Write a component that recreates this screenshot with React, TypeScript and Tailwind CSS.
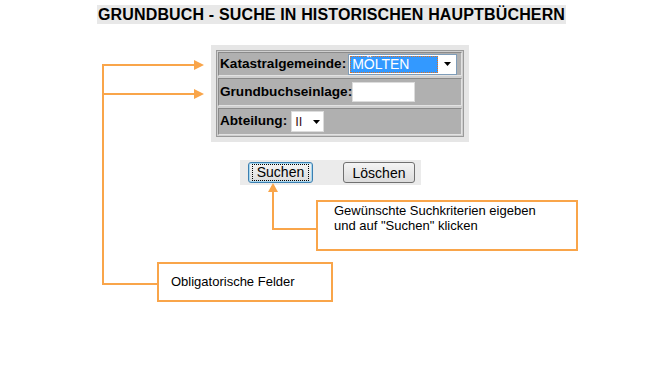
const orange = "border-[#f9a54a]";

const Arrow = ({ dir }: { dir: "right" | "up" }) =>
  dir === "right" ? (
    <svg width="10" height="10" viewBox="0 0 10 10" className="block">
      <polygon points="0,0 10,5 0,10" fill="#f9a54a" />
    </svg>
  ) : (
    <svg width="10" height="9" viewBox="0 0 10 9" className="block">
      <polygon points="5,0 10,9 0,9" fill="#f9a54a" />
    </svg>
  );

const Row = ({ h, children }: { h: string; children: React.ReactNode }) => (
  <div className={`flex items-center ${h} bg-[#b0b0b0] border-t border-l border-t-[#8a8a8a] border-l-[#8a8a8a] border-b border-r border-b-[#e2e2e2] border-r-[#e2e2e2] pl-[1px]`}>
    {children}
  </div>
);

export default function App() {
  return (
    <div
      className="relative w-[667px] h-[371px] bg-white overflow-hidden text-black"
      style={{ fontFamily: '"Liberation Sans", Arial, sans-serif' }}
    >
      {/* title */}
      <div className="flex pt-[5px] pl-[97px]">
        <h1 className="bg-[#e8e8e8] px-[1px] text-[16px] leading-[19px] font-bold tracking-[0.15px]">
          GRUNDBUCH - SUCHE IN HISTORISCHEN HAUPTBÜCHERN
        </h1>
      </div>

      {/* search form */}
      <div className="ml-[211px] mt-[21px] w-[258px] bg-[#e6e6e6] p-[5px]">
        <div className="flex flex-col gap-[2px] border border-[#9a9a9a] bg-[#cfcfcf] p-[1px] text-[13.6px] font-bold">
          <Row h="h-[24px]">
            <span>Katastralgemeinde:</span>
            <div className="ml-[2px] flex items-center h-[21px] w-[109px] bg-white border border-[#7f9db9] pl-[1px]">
              <span className="flex-1 h-[17px] bg-[#3399ff] text-white font-normal text-[14px] leading-[15px] px-[1px] border border-dotted border-[#e07020]">
                MÖLTEN
              </span>
              <span className="w-[18px] flex justify-center">
                <svg width="7" height="4" viewBox="0 0 7 4">
                  <polygon points="0,0 7,0 3.5,4" fill="#000" />
                </svg>
              </span>
            </div>
          </Row>
          <Row h="h-[28px]">
            <span>Grundbuchseinlage:</span>
            <div className="h-[20px] w-[63px] bg-white border border-[#dcdcdc]" />
          </Row>
          <Row h="h-[27px]">
            <span>Abteilung:</span>
            <div className="ml-[4px] flex items-center h-[21px] w-[33px] bg-white border border-[#dcdcdc] pl-[3px]">
              <span className="flex-1 font-normal text-[#401010] text-[13px]">II</span>
              <span className="w-[14px] flex justify-center">
                <svg width="7" height="4" viewBox="0 0 7 4">
                  <polygon points="0,0 7,0 3.5,4" fill="#000" />
                </svg>
              </span>
            </div>
          </Row>
        </div>
      </div>

      {/* buttons */}
      <div className="ml-[240px] mt-[18px] w-[181px] h-[25px] bg-[#ebebeb] flex items-center gap-[30px] pl-[8px] text-[14px]">
        <button className="h-[21px] w-[65px] rounded-[3px] border border-[#3c7fb1] bg-gradient-to-b from-[#f4f4f4] to-[#dcdcdc] shadow-[inset_0_0_0_1px_#a8d8f0] flex items-center justify-center">
          <span className="border border-dotted border-black px-[4px] leading-[15px]">Suchen</span>
        </button>
        <button className="h-[21px] w-[72px] rounded-[3px] border border-[#707070] bg-gradient-to-b from-[#f4f4f4] to-[#dcdcdc]">
          Löschen
        </button>
      </div>

      {/* annotations */}
      <div className="absolute left-[102px] top-[64px] w-[2px] h-[221px] bg-[#f9a54a]" />
      <div className="absolute left-[102px] top-[60px] flex items-center">
        <div className="w-[92px] h-[2px] bg-[#f9a54a]" />
        <Arrow dir="right" />
      </div>
      <div className="absolute left-[102px] top-[89px] flex items-center">
        <div className="w-[92px] h-[2px] bg-[#f9a54a]" />
        <Arrow dir="right" />
      </div>
      <div className="absolute left-[102px] top-[283px] w-[56px] h-[2px] bg-[#f9a54a]" />

      <div className={`absolute left-[157px] top-[262px] w-[176px] h-[40px] border-2 ${orange} bg-white flex items-center pl-[12px] text-[13px]`}>
        Obligatorische Felder
      </div>

      <div className="absolute left-[268px] top-[183px] flex flex-col items-center">
        <Arrow dir="up" />
        <div className="w-[2px] h-[38px] bg-[#f9a54a]" />
      </div>
      <div className="absolute left-[272px] top-[228px] w-[45px] h-[2px] bg-[#f9a54a]" />

      <div className={`absolute left-[316px] top-[200px] w-[262px] h-[51px] border-2 ${orange} bg-white pl-[16px] pt-[1px] text-[13px] leading-[15px]`}>
        Gewünschte Suchkriterien eigeben
        <br />
        und auf "Suchen" klicken
      </div>
    </div>
  );
}
